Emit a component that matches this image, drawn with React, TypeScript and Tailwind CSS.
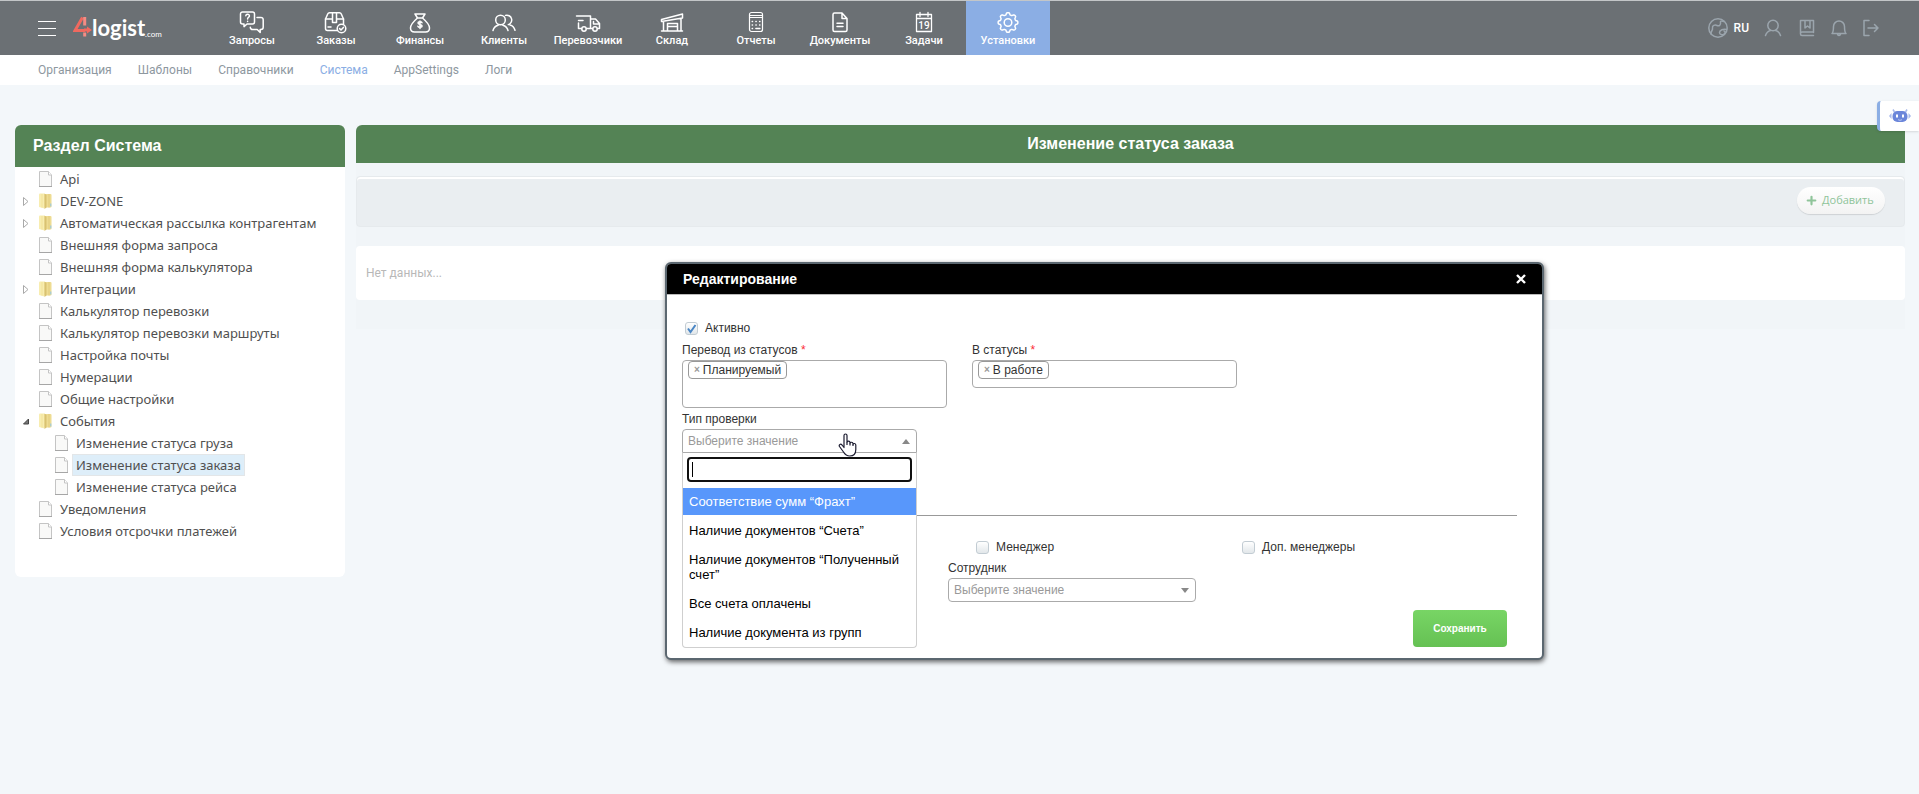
import type { ReactNode } from 'react'
import { Plus } from 'lucide-react'

interface NavEntry {
  label: string
  icon: ReactNode
  active?: boolean
}

interface TreeEntry {
  label: string
  kind: 'file' | 'folder'
  open?: boolean
  selected?: boolean
  children?: TreeEntry[]
}

function Glyph({ children, width = 26, height = 24 }: { children: ReactNode; width?: number; height?: number }) {
  return (
    <svg
      width={width}
      height={height}
      viewBox={`0 0 ${width} ${height}`}
      fill="none"
      stroke="currentColor"
      strokeWidth="1.5"
      strokeLinecap="round"
      strokeLinejoin="round"
      aria-hidden="true"
    >
      {children}
    </svg>
  )
}

// soft eight-lobed outline of the settings gear
const GEAR_OUTLINE = Array.from({ length: 96 }, (_, i) => {
  const angle = (i / 96) * Math.PI * 2
  const radius = 8.8 + 1.1 * Math.tanh(2 * Math.cos(8 * angle))
  return `${(13 + radius * Math.cos(angle)).toFixed(2)},${(12.5 + radius * Math.sin(angle)).toFixed(2)}`
}).join(' ')

const NAV: NavEntry[] = [
  {
    label: 'Запросы',
    icon: (
      <Glyph>
        <path d="M3.500 2h10a2 2 0 0 1 2 2v8a2 2 0 0 1-2 2H8l-3 2.600V14H3.500a2 2 0 0 1-2-2V4a2 2 0 0 1 2-2z" />
        <path d="M6.800 5.800c.2-2 3.700-2 3.600.1 0 1.400-1.800 1.400-1.800 3M8.600 11.200v.2" />
        <path d="M18 7.500h4a2.200 2.200 0 0 1 2.200 2.200v7.600a2.200 2.200 0 0 1-2.200 2.200h-.8v3l-3-3h-4.700a2.200 2.200 0 0 1-2.200-2.200" />
      </Glyph>
    ),
  },
  {
    label: 'Заказы',
    icon: (
      <Glyph>
        <path d="M14 20.500H4.500a2 2 0 0 1-2-2V9l2.200-5a2 2 0 0 1 1.800-1.200h10a2 2 0 0 1 1.800 1.200L20.500 9v5" />
        <path d="M2.500 9h7M13.500 9h7M9.500 3v9.500h4V3M5 17h3" />
        <circle cx="18.500" cy="18.500" r="4.300" />
        <path d="m16.600 18.600 1.400 1.400 2.400-2.600" />
      </Glyph>
    ),
  },
  {
    label: 'Финансы',
    icon: (
      <Glyph>
        <path d="M8 4h10l-2.500 4h-5zM10 8h6M10.500 8C7 11 3.500 15 3.500 18c0 2.500 1.500 4 4 4h11c2.500 0 4-1.500 4-4 0-3-3.500-7-7-10" />
        <path d="M15 12.700c-.5-1.200-4-1.200-4 .4 0 1.800 4.100 1 4.100 2.900 0 1.600-3.700 1.600-4.200.2M13 11v7.500" />
      </Glyph>
    ),
  },
  {
    label: 'Клиенты',
    icon: (
      <Glyph>
        <circle cx="9.500" cy="10" r="4.800" />
        <path d="M2 20.500c.8-3 2.800-4.600 5-5.200M17 20.500c-.8-3-2.800-4.600-5-5.200M14.500 5.400a4.800 4.800 0 1 1 2.800 9.200M19 15c2.300.6 4.200 2.400 5 5.200" />
      </Glyph>
    ),
  },
  {
    label: 'Перевозчики',
    icon: (
      <Glyph>
        <path d="M1.500 6h14v12.500h-4M3.500 10.500H8M3.500 13v5.500h3M15.500 9h5l4 4.500v5h-2M17.500 18.500h-2M18.500 11.500v2.500h5" />
        <circle cx="9" cy="19" r="2.200" />
        <circle cx="20" cy="19" r="2.200" />
      </Glyph>
    ),
  },
  {
    label: 'Склад',
    icon: (
      <Glyph>
        <path d="M2.500 9.500 23.500 4v4L2.500 11.500zM4.500 11.500V21M22 8.500V21M2.500 21h6M18.500 21h5M8.500 21v-7.500h10V21zM8.500 16.500h10" />
      </Glyph>
    ),
  },
  {
    label: 'Отчеты',
    icon: (
      <Glyph>
        <rect x="6.500" y="2.500" width="13" height="19" rx="2" strokeWidth="1.200" />
        <path d="M6.500 7.500h13M6.500 5.500h13" strokeWidth="1.200" />
        <path d="M9.200 11.500h.3M12.900 11.500h.3M16.600 11.500h.3M9.200 15h.3M12.900 15h.3M16.600 15h.3M9.200 18.500h.3M12.900 18.500h4" />
      </Glyph>
    ),
  },
  {
    label: 'Документы',
    icon: (
      <Glyph>
        <path d="M7.500 3H15l5 5.500V20a1.500 1.500 0 0 1-1.500 1.500h-11A1.500 1.500 0 0 1 6 20V4.500A1.500 1.500 0 0 1 7.500 3zM15 3v5.500h5M10 13.200h6M10 16.500h6" />
      </Glyph>
    ),
  },
  {
    label: 'Задачи',
    icon: (
      <Glyph>
        <path d="M5.500 4.500h15v17h-15zM5.500 8.500h15M9 2.500v4M17 2.500v4" strokeWidth="1.300" />
        <text x="13" y="18.500" fontSize="10" fontFamily="Roboto" fontWeight="500" textAnchor="middle" fill="currentColor" stroke="none">
          19
        </text>
      </Glyph>
    ),
  },
  {
    label: 'Установки',
    active: true,
    icon: (
      <Glyph>
        <polygon points={GEAR_OUTLINE} />
        <circle cx="13" cy="12.500" r="3.800" />
      </Glyph>
    ),
  },
]

const SUBNAV = ['Организация', 'Шаблоны', 'Справочники', 'Система', 'AppSettings', 'Логи']

const TREE: TreeEntry[] = [
  { label: 'Api', kind: 'file' },
  { label: 'DEV-ZONE', kind: 'folder' },
  { label: 'Автоматическая рассылка контрагентам', kind: 'folder' },
  { label: 'Внешняя форма запроса', kind: 'file' },
  { label: 'Внешняя форма калькулятора', kind: 'file' },
  { label: 'Интеграции', kind: 'folder' },
  { label: 'Калькулятор перевозки', kind: 'file' },
  { label: 'Калькулятор перевозки маршруты', kind: 'file' },
  { label: 'Настройка почты', kind: 'file' },
  { label: 'Нумерации', kind: 'file' },
  { label: 'Общие настройки', kind: 'file' },
  {
    label: 'События',
    kind: 'folder',
    open: true,
    children: [
      { label: 'Изменение статуса груза', kind: 'file' },
      { label: 'Изменение статуса заказа', kind: 'file', selected: true },
      { label: 'Изменение статуса рейса', kind: 'file' },
    ],
  },
  { label: 'Уведомления', kind: 'file' },
  { label: 'Условия отсрочки платежей', kind: 'file' },
]

const CHECK_TYPES = [
  'Соответствие сумм “Фрахт”',
  'Наличие документов “Счета”',
  'Наличие документов “Полученный счет”',
  'Все счета оплачены',
  'Наличие документа из групп',
]

function Logo() {
  return (
    <a href="#" className="flex items-end text-white" aria-label="4logist.com">
      <svg width="19" height="22" viewBox="0 0 19 22" className="mb-1" aria-hidden="true">
        <path d="M9.500 1.500 2 14.500h10" fill="none" stroke="#f0695f" strokeWidth="3" />
        <path d="M11.700 1v8.500M11.700 16.500v4" fill="none" stroke="#f58b83" strokeWidth="3" />
        <path d="M11 12.500h3V10.500l5 3.500-5 3.500v-2h-3z" fill="#f0695f" />
      </svg>
      <span className="font-[Lato] text-[22px] leading-7 font-bold">logist</span>
      <span className="font-[Lato] text-[8px] leading-4">.com</span>
    </a>
  )
}

function TopBar() {
  return (
    <header className="flex h-[55px] items-stretch border-t border-[#c3c6c8] bg-[#6b7074] font-[Roboto] text-white">
      <div className="flex w-[210px] shrink-0 items-center gap-[17px] pl-[38px]">
        <button type="button" aria-label="Меню" className="flex w-[18px] flex-col gap-[6px]">
          <span className="h-px bg-white" />
          <span className="h-px bg-white" />
          <span className="h-px bg-white" />
        </button>
        <Logo />
      </div>
      <nav className="flex">
        {NAV.map((item) => (
          <a
            key={item.label}
            href="#"
            className={
              item.active
                ? 'flex w-[84px] flex-col items-center bg-[#8baee4] pt-[9px] text-[11px] leading-[13px] font-medium'
                : 'flex w-[84px] flex-col items-center pt-[9px] text-[11px] leading-[13px] font-medium'
            }
          >
            {item.icon}
            {item.label}
          </a>
        ))}
      </nav>
      <div className="ml-auto flex items-center gap-3 pr-[38px] text-[#9ba5ad]">
        <button type="button" className="flex items-center gap-[6px]">
          <Glyph width={20} height={20}>
            <circle cx="10" cy="10" r="9.200" />
            <path d="M3 16c-.5-3 2-3 1.500-6C4 7.500 7 6.500 9 7.500s4-.500 3.500-3S15 3 16 3.500M18.500 11.500c-3-1-7 .500-7 3s3 2.500 4.500 1.500 1.500-3 0-3" />
          </Glyph>
          <span className="text-xs font-medium text-white">RU</span>
        </button>
        <button type="button" aria-label="Профиль" className="ml-[2px]">
          <Glyph width={20} height={20}>
            <circle cx="10" cy="7.500" r="5.200" />
            <path d="M2.500 17.500c1-3 3-4.500 5-5M17.500 17.500c-1-3-3-4.500-5-5" />
          </Glyph>
        </button>
        <button type="button" aria-label="Справка" className="ml-[2px]">
          <Glyph width={20} height={20}>
            <path d="M16.500 14.500v-12h-13v13.500a1.500 1.500 0 0 0 1.500 1.500h11.500M3.500 15.500c0-1 .7-1.500 1.500-1.500h11.500M8 2.500V10l2.500-2 2.500 2V2.500" />
          </Glyph>
        </button>
        <button type="button" aria-label="Уведомления">
          <Glyph width={20} height={20}>
            <path d="M3 15.500c1.200-1 1.500-2 1.500-7a5.500 5.500 0 0 1 11 0c0 5 .3 6 1.500 7zM8.500 15.500c0 2.500 3 2.500 3 0" />
          </Glyph>
        </button>
        <button type="button" aria-label="Выход">
          <Glyph width={20} height={20}>
            <path d="M8 2.500H3v15h5M7 10h10M13.500 6.500 17 10l-3.500 3.500" />
          </Glyph>
        </button>
      </div>
    </header>
  )
}

function SubNav() {
  return (
    <nav className="flex h-[30px] items-center gap-[26px] bg-white pl-[38px] font-[Roboto] text-xs text-[#8e989f]">
      {SUBNAV.map((label) => (
        <a key={label} href="#" className={label === 'Система' ? 'text-[#8baee4]' : undefined}>
          {label}
        </a>
      ))}
    </nav>
  )
}

function FileIcon() {
  return (
    <svg width="13" height="16" viewBox="0 0 13 16" aria-hidden="true">
      <path d="M.5.500h9l3 3.500v11.500H.500z" fill="#f9f9f8" stroke="#c4c4c4" />
      <path d="M9.500.500V4h3" fill="#fff" stroke="#c4c4c4" />
      <path d="M0 15.500h13" stroke="#a6a6a6" />
    </svg>
  )
}

function FolderIcon() {
  return (
    <svg width="13" height="16" viewBox="0 0 13 16" aria-hidden="true">
      <path d="M5 1h6.500a1 1 0 0 1 1 1v11.500a1 1 0 0 1-1 1H5z" fill="#eedc92" />
      <path d="M10 1v13.500" stroke="#e2cb7c" />
      <path d="M0 1.500Q0 .500 1 .500h4.500v15L0 14z" fill="#f8edb0" />
      <path d="M5.500.500 7.500 2v12.500l-2 1.500z" fill="#d9c272" />
      <path d="M3 1v13.500" stroke="#f2e299" />
      <path d="M11.800 10.500v3" stroke="#8fc7ea" />
    </svg>
  )
}

function TreeRow({ entry, nested }: { entry: TreeEntry; nested?: boolean }) {
  return (
    <li>
      <div className={nested ? 'flex h-[22px] items-center pl-10' : 'flex h-[22px] items-center pl-2'}>
        {!nested && (
          <span className="flex w-4 shrink-0">
            {entry.kind === 'folder' && (
              <svg width="6" height="10" viewBox="0 0 6 10" aria-hidden="true">
                {entry.open ? (
                  <path d="M5.500 3v5H.500z" fill="#777" stroke="#444" />
                ) : (
                  <path d="M.5 1.500 5 5.500.500 9.500z" fill="#fff" stroke="#a9a9a9" />
                )}
              </svg>
            )}
          </span>
        )}
        {entry.kind === 'folder' ? <FolderIcon /> : <FileIcon />}
        <a
          href="#"
          className={
            entry.selected
              ? 'ml-1 border border-[#e3e6e8] bg-[#deeef9] px-[3px] leading-5 whitespace-nowrap'
              : 'ml-1 border border-transparent px-[3px] leading-5 whitespace-nowrap'
          }
        >
          {entry.label}
        </a>
      </div>
      {entry.children && (
        <ul>
          {entry.children.map((child) => (
            <TreeRow key={child.label} entry={child} nested />
          ))}
        </ul>
      )}
    </li>
  )
}

function Sidebar() {
  return (
    <aside className="w-[330px] shrink-0 overflow-hidden rounded-md bg-white pb-[35px]">
      <h2 className="bg-[#548355] px-[18px] text-base leading-[42px] font-bold text-white">Раздел Система</h2>
      <ul className="pt-px font-['Noto_Sans'] text-[13px] text-[#505050]">
        {TREE.map((entry) => (
          <TreeRow key={entry.label} entry={entry} />
        ))}
      </ul>
    </aside>
  )
}

function Checkbox({ id, label, checked }: { id: string; label: string; checked?: boolean }) {
  return (
    <div className="flex h-4 items-center gap-[7px]">
      <span className="relative flex">
        <input
          id={id}
          type="checkbox"
          defaultChecked={checked}
          className="peer h-[13px] w-[13px] appearance-none rounded-[3px] border border-[#c2ccd3] bg-linear-to-b from-white to-[#e2e7ea]"
        />
        <svg
          width="13"
          height="13"
          viewBox="0 0 13 13"
          className="pointer-events-none absolute inset-0 hidden peer-checked:block"
          aria-hidden="true"
        >
          <path d="m3 6.500 2.500 3.500L10.500 3" fill="none" stroke="#4a86c5" strokeWidth="2" />
        </svg>
      </span>
      <label htmlFor={id}>{label}</label>
    </div>
  )
}

function TagField({ id, label, tag, tall }: { id: string; label: string; tag: string; tall?: boolean }) {
  return (
    <div className="w-[265px]">
      <label htmlFor={id} className="block leading-5">
        {label} <span className="text-red-500">*</span>
      </label>
      <div
        className={
          tall
            ? 'flex h-12 items-start rounded border border-[#aaa] bg-white pl-[5px]'
            : 'flex h-7 items-start rounded border border-[#aaa] bg-white pl-[5px]'
        }
      >
        <span className="flex h-[18px] shrink-0 items-center gap-[3px] rounded border border-[#999] px-[5px]">
          <button type="button" aria-label="Удалить" className="text-[10px] leading-4 font-bold text-[#999]">
            ×
          </button>
          {tag}
        </span>
        <input id={id} className="h-[18px] w-full min-w-0 outline-none" />
      </div>
    </div>
  )
}

function PlaceholderSelect({ id, open }: { id: string; open?: boolean }) {
  return (
    <div className="relative">
      <select
        id={id}
        defaultValue=""
        className={
          open
            ? 'block h-6 w-full appearance-none rounded-t border border-[#aaa] bg-white px-[5px] pb-px text-[#999] outline-none'
            : 'block h-6 w-full appearance-none rounded border border-[#aaa] bg-white px-[5px] pb-px text-[#999] outline-none'
        }
      >
        <option value="">Выберите значение</option>
      </select>
      <svg width="8" height="5" viewBox="0 0 8 5" className="pointer-events-none absolute top-[10px] right-[7px]" aria-hidden="true">
        <path d={open ? 'M0 5h8L4 0z' : 'M0 0h8L4 5z'} fill="#888" />
      </svg>
    </div>
  )
}

function CheckTypeDropdown() {
  return (
    <div className="absolute top-full left-0 z-10 w-full rounded-b border border-t-0 border-[#cfcfcf] bg-white pt-1 text-[13px] leading-[15px] text-black">
      <div className="relative px-1">
        <input
          aria-label="Поиск"
          autoFocus
          className="block h-[25px] w-full rounded border-2 border-[#101010] px-1 caret-transparent outline-none"
        />
        <span className="pointer-events-none absolute top-[5px] left-[9px] h-[15px] w-px bg-black" />
      </div>
      <ul role="listbox" className="mt-[6px]">
        {CHECK_TYPES.map((type, i) => (
          <li
            key={type}
            role="option"
            aria-selected={i === 0}
            className={i === 0 ? 'mb-px bg-[#5897fb] px-[6px] py-[6px] text-white' : 'px-[6px] py-[7px]'}
          >
            {type}
          </li>
        ))}
      </ul>
    </div>
  )
}

function HandCursor() {
  return (
    <svg width="19" height="24" viewBox="0 0 19 24" className="pointer-events-none absolute top-1 left-[156px] z-20" aria-hidden="true">
      <path
        d="M6 14.500V2.500c0-2 3-2 3 0v7c0-1.800 3-1.800 3 .2v.8c0-1.800 3-1.600 3 .2v.8c.2-1.500 2.800-1.300 2.800.5v4.500c0 4-2.300 6.500-6 6.500-3 0-4.800-1.500-6.300-4L1.500 13.500c-1-2 1.200-3 2.500-1.500z"
        fill="#fff"
        stroke="#1c1c30"
        strokeWidth="1.200"
        strokeLinejoin="round"
      />
      <path d="M9 9.500V12M12 10.500V12.500M15 11.500V13" stroke="#1c1c30" strokeWidth="1.200" />
    </svg>
  )
}

function EditDialog() {
  return (
    <section
      role="dialog"
      aria-labelledby="edit-title"
      className="absolute top-[262px] left-[665px] w-[879px] rounded-md border-2 border-[#5b6770] bg-white text-xs text-[#333] shadow-[1px_2px_5px_rgba(0,0,0,0.6)]"
    >
      <div className="flex h-[31px] items-center justify-between rounded-t border-b border-[#bbb] bg-black pr-[15px] pl-4 text-white">
        <h2 id="edit-title" className="text-sm font-bold">
          Редактирование
        </h2>
        <button type="button" aria-label="Закрыть" className="p-px">
          <svg width="10" height="10" viewBox="0 0 10 10" aria-hidden="true">
            <path d="m1 1 8 8M9 1 1 9" stroke="#fff" strokeWidth="2.400" />
          </svg>
        </button>
      </div>

      <form className="pt-[25px] pr-[25px] pl-[15px]">
        <div className="pl-[3px]">
          <Checkbox id="active" label="Активно" checked />
        </div>
        <div className="mt-1 flex gap-[25px]">
          <TagField id="from-status" label="Перевод из статусов" tag="Планируемый" tall />
          <TagField id="to-status" label="В статусы" tag="В работе" />
        </div>
        <div className="mt-px w-[235px]">
          <label htmlFor="check-type" className="block leading-5">
            Тип проверки
          </label>
          <div className="relative">
            <PlaceholderSelect id="check-type" open />
            <CheckTypeDropdown />
            <HandCursor />
          </div>
        </div>
        <hr className="mt-[62px] border-[#999]" />
        <div className="mt-[23px] grid grid-cols-[266px_266px_1fr]">
          <div className="col-start-2 pl-[28px]">
            <Checkbox id="manager" label="Менеджер" />
          </div>
          <div className="pl-[28px]">
            <Checkbox id="extra-managers" label="Доп. менеджеры" />
          </div>
          <div className="col-start-2 mt-[3px] w-[248px]">
            <label htmlFor="employee" className="block leading-5">
              Сотрудник
            </label>
            <PlaceholderSelect id="employee" />
          </div>
        </div>
        <div className="flex justify-end pt-2 pr-[10px] pb-[11px]">
          <button
            type="button"
            className="h-[37px] w-[94px] rounded bg-linear-to-b from-[#78d565] to-[#65c153] text-[10px] font-bold text-white"
          >
            Сохранить
          </button>
        </div>
      </form>
    </section>
  )
}

function AssistantTab() {
  return (
    <button
      type="button"
      aria-label="Помощник"
      className="absolute top-[101px] right-0 flex h-[30px] w-[42px] items-center justify-center rounded-l-sm border-l-[3px] border-[#8baee4] bg-white shadow-sm"
    >
      <svg width="24" height="18" viewBox="0 0 24 18" aria-hidden="true">
        <path d="M5 2.500 6.500 5M19 2.500 17.500 5" stroke="#a8b9ea" strokeWidth="1.500" />
        <path d="M3.500 6 1 9l2.500 3zM20.500 6 23 9l-2.500 3z" fill="#a8b9ea" />
        <rect x="4.500" y="4" width="15" height="11" rx="5" fill="#6b86da" />
        <rect x="8" y="7.500" width="2" height="3" fill="#fff" />
        <rect x="14" y="7.500" width="2" height="3" fill="#fff" />
        <path d="M10 12.500c1 1 3 1 4 0" stroke="#b9c7f2" fill="none" />
      </svg>
    </button>
  )
}

export default function App() {
  return (
    <div className="relative min-h-screen bg-[#f3f7fa] font-['Liberation_Sans',sans-serif]">
      <TopBar />
      <SubNav />
      <div className="flex items-start gap-[11px] pt-10 pr-[14px] pl-[15px]">
        <Sidebar />
        <main className="min-w-0 flex-1 bg-[#f1f5f8] pb-[29px]">
          <h1 className="rounded-tl-md bg-[#548355] text-center text-base leading-[38px] font-bold text-white">
            Изменение статуса заказа
          </h1>
          <div className="mt-[13px] flex h-[51px] items-start justify-end rounded-sm border border-[#e6eaed] bg-[#eaeef1] pt-[10px] pr-[19px] shadow-[inset_0_2px_0_#fff]">
            <button
              type="button"
              className="flex h-[27px] w-[88px] items-center gap-1 rounded-full bg-linear-to-b from-white to-[#f3f3f3] pl-2 font-['Open_Sans'] text-[11px] text-[#8fc49a] shadow-[0_1px_1px_rgba(0,0,0,0.12)]"
            >
              <Plus size={13} strokeWidth={4} />
              Добавить
            </button>
          </div>
          <p className="mt-[19px] rounded-sm bg-white px-[10px] font-[Roboto] text-xs leading-[54px] text-[#b8b8b8]">Нет данных...</p>
        </main>
      </div>
      <AssistantTab />
      <EditDialog />
    </div>
  )
}
